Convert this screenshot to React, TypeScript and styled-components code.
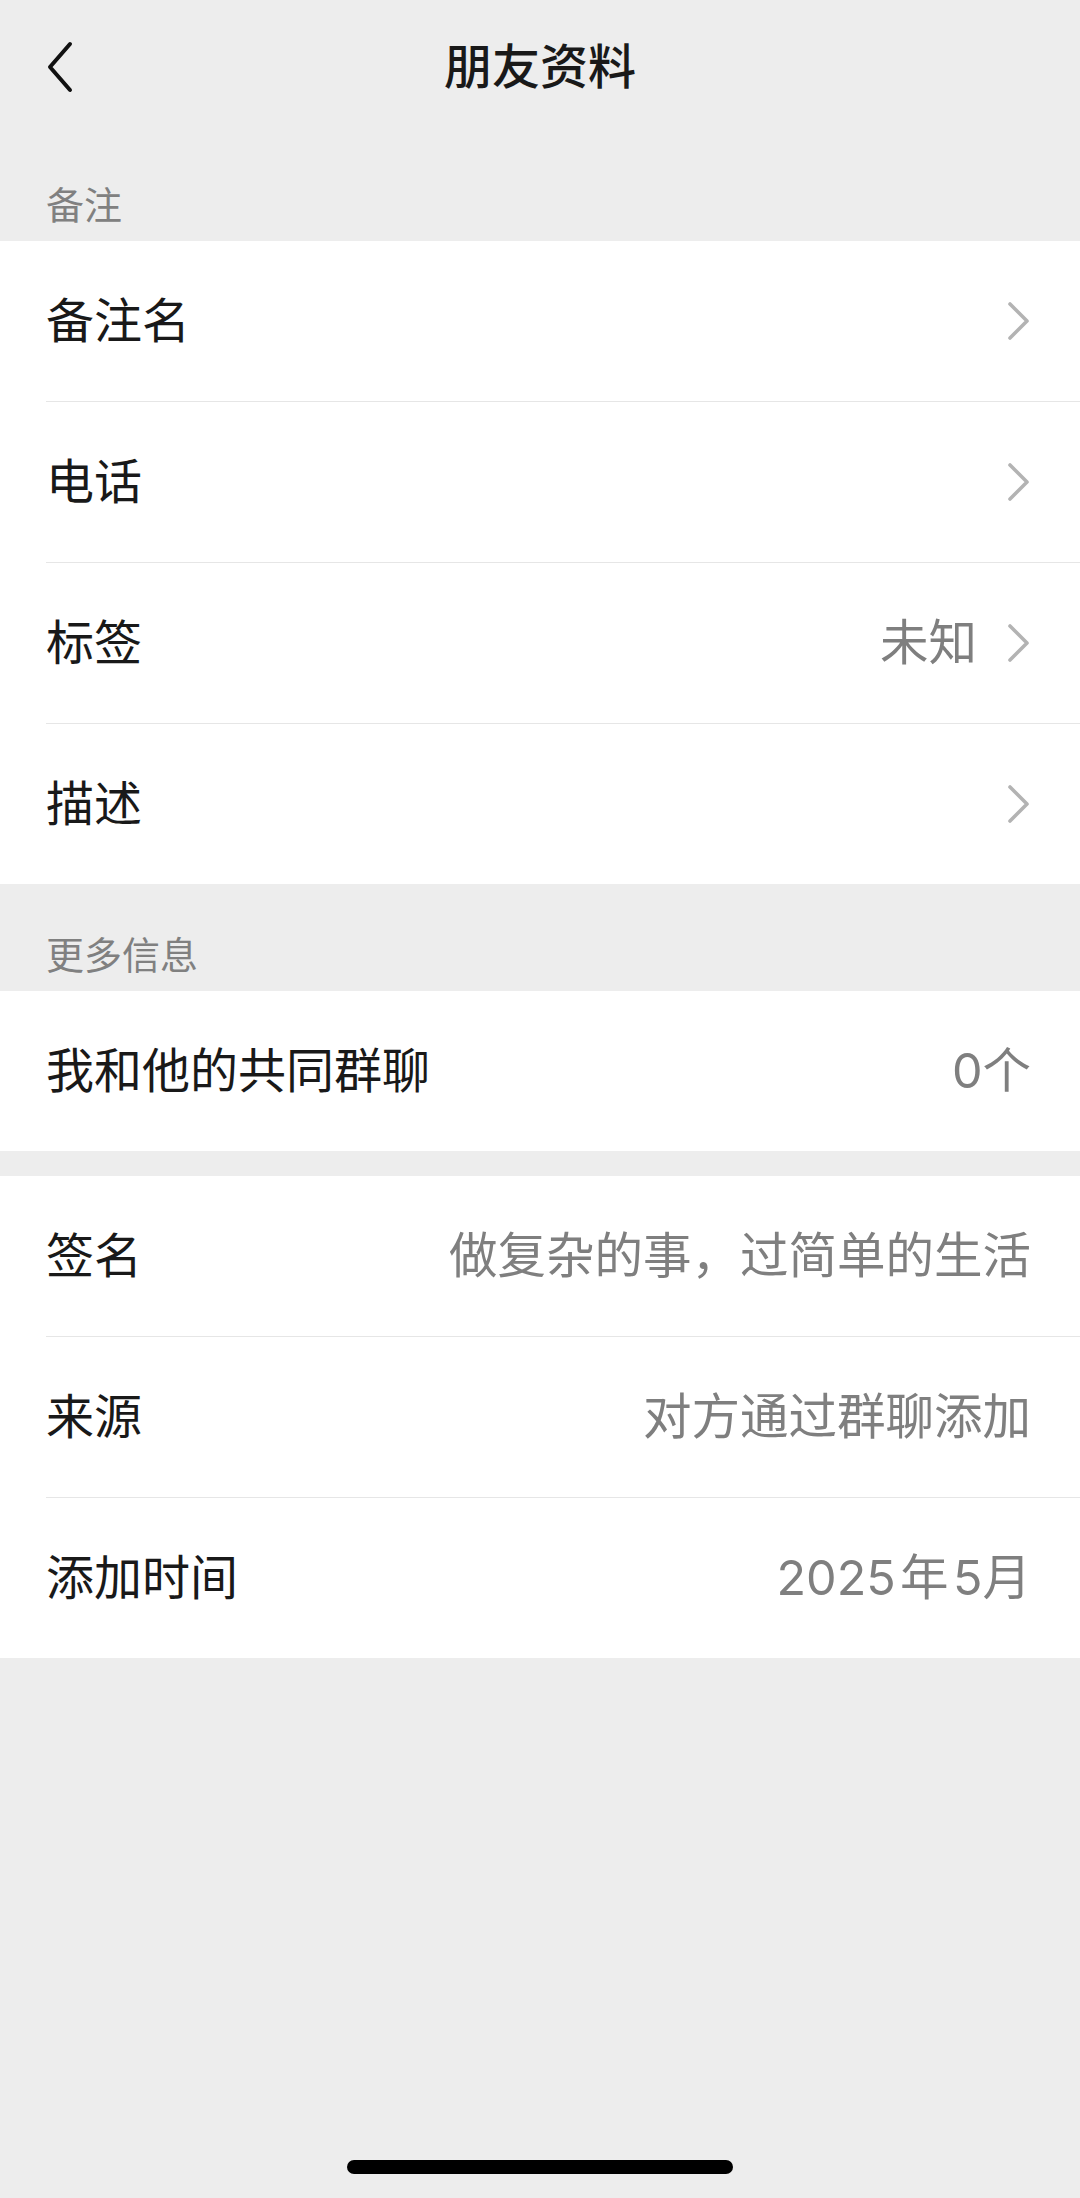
import styled, { createGlobalStyle } from "styled-components"

interface RowProps {
    label: string;
    value?: string;
    arrow?: boolean;
}

const GlobalStyle = createGlobalStyle`
    html, body {
        margin: 0;
        padding: 0;
        background: #ededed;
    }
    body {
        font-family: "Inter", "Noto Sans CJK SC", sans-serif;
        -webkit-font-smoothing: antialiased;
    }
`

const BackIcon = () => (
    <svg width="34" height="54" viewBox="0 0 34 54" fill="none">
        <polyline points="26,4 6,27 26,50" stroke="#111" strokeWidth="4" strokeLinecap="round" strokeLinejoin="round" />
    </svg>
)

const ArrowIcon = () => (
    <svg width="24" height="42" viewBox="0 0 24 42" fill="none">
        <polyline points="3,4 20,21 3,38" stroke="#b3b3b3" strokeWidth="3.6" strokeLinecap="round" strokeLinejoin="round" />
    </svg>
)

const InfoRow = ({ label, value, arrow }: RowProps) => {
    return <Row>
        <RowLabel>{label}</RowLabel>
        <RowRight>
            {value && <RowValue>{value}</RowValue>}
            {arrow && <ArrowIcon />}
        </RowRight>
    </Row>
}

const App = () => {
    return <Page>
        <GlobalStyle />
        <NavBar>
            <BackButton><BackIcon /></BackButton>
            <Title>朋友资料</Title>
        </NavBar>

        <SectionLabel>备注</SectionLabel>
        <Group>
            <InfoRow label="备注名" arrow />
            <InfoRow label="电话" arrow />
            <InfoRow label="标签" value="未知" arrow />
            <InfoRow label="描述" arrow />
        </Group>

        <SectionLabel>更多信息</SectionLabel>
        <Group>
            <InfoRow label="我和他的共同群聊" value="0个" />
        </Group>

        <Group $gap>
            <InfoRow label="签名" value="做复杂的事，过简单的生活" />
            <InfoRow label="来源" value="对方通过群聊添加" />
            <InfoRow label="添加时间" value={"2025\u200a年\u200a5月"} />
        </Group>

        <Spacer />
        <HomeBar />
    </Page>
}

const Page = styled.div`
    min-height: 2198px;
    display: flex;
    flex-direction: column;
    background: #ededed;
    color: #191919;
`

const NavBar = styled.div`
    position: relative;
    height: 134px;
    display: flex;
    align-items: center;
    justify-content: center;
`

const BackButton = styled.div`
    position: absolute;
    left: 44px;
    top: 40px;
    display: flex;
`

const Title = styled.div`
    font-size: 48px;
    font-weight: 500;
    line-height: 48px;
`

const SectionLabel = styled.div`
    height: 107px;
    box-sizing: border-box;
    display: flex;
    align-items: flex-end;
    padding: 0 0 16px 46px;
    font-size: 38px;
    line-height: 40px;
    color: #808080;
`

const Group = styled.div<{ $gap?: boolean }>`
    background: #fff;
    margin-top: ${p => p.$gap ? "25px" : "0"};
`

const Row = styled.div`
    height: 160px;
    margin-left: 46px;
    padding-right: 49px;
    display: flex;
    align-items: center;
    justify-content: space-between;

    & + & {
        border-top: 1.5px solid #e6e6e6;
    }
`

const RowLabel = styled.div`
    font-size: 48px;
    line-height: 52px;
    color: #191919;
`

const RowRight = styled.div`
    display: flex;
    align-items: center;
    gap: 30px;
`

const RowValue = styled.div`
    font-size: 48.5px;
    line-height: 52px;
    color: #7f7f7f;
    white-space: pre;
`

const Spacer = styled.div`
    flex: 1;
`

const HomeBar = styled.div`
    align-self: center;
    width: 386px;
    height: 14px;
    border-radius: 7px;
    background: #000;
    margin-bottom: 24px;
`

export default App
